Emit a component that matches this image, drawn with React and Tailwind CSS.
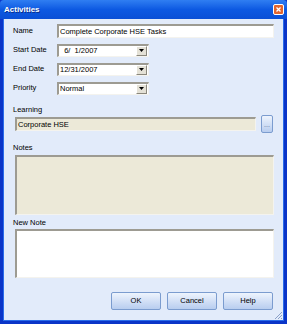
import React from "react";

const font = { fontFamily: '"Liberation Sans", Arial, sans-serif' };

function Input({ children, className = "", bg = "bg-white" }) {
  return (
    <div
      className={`${bg} border-t-2 border-l-2 border-b border-r border-t-[#9d9b92] border-l-[#9d9b92] border-b-[#f4f3ee] border-r-[#f4f3ee] ${className}`}
    >
      {children}
    </div>
  );
}

function Select({ value }) {
  return (
    <Input className="w-[92px] h-[13px] flex items-center">
      <span className="flex-1 pl-[1px] text-[7.5px] leading-none text-black whitespace-pre">{value}</span>
      <div className="w-[11px] h-[10px] mr-[1px] bg-[#e4e1d6] border border-t-white border-l-white border-b-[#8a877c] border-r-[#8a877c] flex items-center justify-center">
        <svg width="5" height="3" viewBox="0 0 5 3"><path d="M0 0h5L2.5 3z" fill="#000" /></svg>
      </div>
    </Input>
  );
}

function Btn({ children }) {
  return (
    <div className="w-[50px] h-[18px] rounded-[2px] border border-[#7b9ccf] bg-gradient-to-b from-[#eef4fd] to-[#b8cdef] flex items-center justify-center text-[7.5px] text-black">
      {children}
    </div>
  );
}

function Row({ label, children, mt }) {
  return (
    <div className={`flex items-center h-[14px] ${mt}`}>
      <span className="w-[44px] shrink-0 text-[7.5px] leading-none text-black whitespace-nowrap">{label}</span>
      {children}
    </div>
  );
}

export default function App() {
  return (
    <div className="w-[287px] h-[324px] bg-[#0a35c8] flex flex-col" style={font}>
      <div className="h-[19px] shrink-0 bg-gradient-to-b from-[#2f7ef2] via-[#0d59e2] to-[#0a4fd6] flex items-center justify-between pl-[4px] pr-[3px] rounded-t-[4px]">
        <span className="text-white font-bold text-[8px] [text-shadow:1px_1px_0_#0b2d8a]">Activities</span>
        <div className="w-[11px] h-[11px] rounded-[2px] bg-[#e2652f] border border-white flex items-center justify-center">
          <svg width="5" height="5" viewBox="0 0 5 5"><path d="M0.5 0.5l4 4M4.5 0.5l-4 4" stroke="#fff" strokeWidth="1.3" /></svg>
        </div>
      </div>
      <div className="flex-1 mx-[3px] mb-[3px] border-l border-r border-b border-[#2a6cea] bg-[#e2ebfa] flex flex-col pl-[9px] pr-[9px] pt-[5px] relative">
        <Row label="Name" mt="">
          <Input className="flex-1 h-[14px] flex items-center">
            <span className="pl-[1px] text-[7.5px] leading-none">Complete Corporate HSE Tasks</span>
          </Input>
        </Row>
        <Row label="Start Date" mt="mt-[5px]">
          <Select value="  6/  1/2007" />
        </Row>
        <Row label="End Date" mt="mt-[5px]">
          <Select value="12/31/2007" />
        </Row>
        <Row label="Priority" mt="mt-[5px]">
          <Select value="Normal" />
        </Row>
        <div className="text-[7.5px] text-black mt-[10px] leading-[10px] h-[10px]">Learning</div>
        <div className="flex items-center h-[18px] pl-[2px]">
          <Input bg="bg-[#ece9d8]" className="w-[241px] h-[14px] flex items-center">
            <span className="pl-[1px] text-[7.5px] leading-none">Corporate HSE</span>
          </Input>
          <div className="ml-[5px] w-[12px] h-[18px] rounded-[2px] border border-[#7b9ccf] bg-gradient-to-b from-[#eef4fd] to-[#b8cdef] flex items-end justify-center pb-[4px] text-[7px] leading-none text-[#5a6f98]">...</div>
        </div>
        <div className="text-[7.5px] text-black mt-[10px] leading-[10px] h-[10px]">Notes</div>
        <Input bg="bg-[#ece9d8]" className="ml-[2px] mt-[2px] h-[60px]" />
        <div className="text-[7.5px] text-black mt-[3px] leading-[10px] h-[10px]">New Note</div>
        <Input className="ml-[2px] mt-[1px] h-[49px]" />
        <div className="flex justify-end gap-[6px] mt-[14px] pr-[1px]">
          <Btn>OK</Btn>
          <Btn>Cancel</Btn>
          <Btn>Help</Btn>
        </div>
        <svg className="absolute right-[0px] bottom-[0px]" width="10" height="10" viewBox="0 0 10 10">
          <path d="M9 2L2 9M9 5L5 9M9 8L8 9" stroke="#8aa0c8" strokeWidth="1" />
        </svg>
      </div>
    </div>
  );
}
